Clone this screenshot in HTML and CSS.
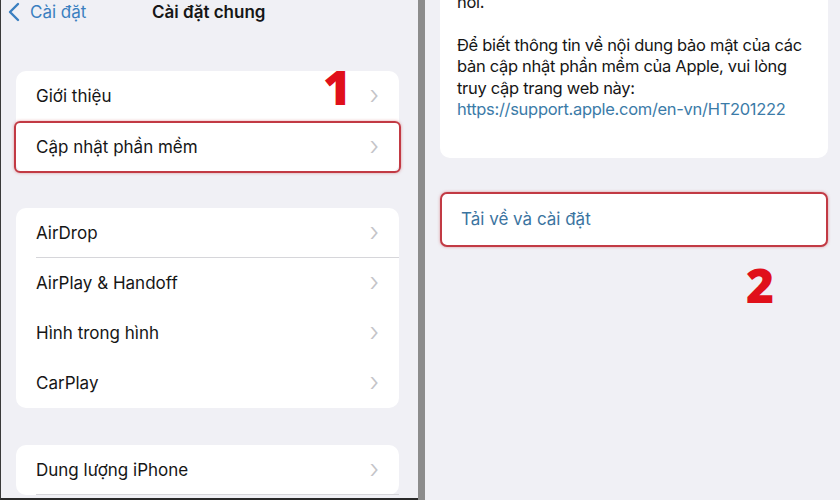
FILE: index.html
```html
<!DOCTYPE html>
<html>
    <head>
        <title>Cài đặt chung</title>
        <meta charset="utf-8">
        <link rel="stylesheet" href="styles.css">
    </head>
    <body>
        <div class="screen">
            <div class="pane left">
                <div class="nav">
                    <span class="back">
                        <svg width="12" height="20" viewBox="0 0 12 20"><path d="M10 2 L2 10 L10 18" fill="none" stroke="#3a7fc0" stroke-width="2.4" stroke-linecap="round" stroke-linejoin="round"/></svg>
                        Cài đặt
                    </span>
                    <span class="title">Cài đặt chung</span>
                </div>

                <div class="group first">
                    <div class="row">Giới thiệu <span class="chev">›</span></div>
                    <div class="row marked">Cập nhật phần mềm <span class="chev">›</span></div>
                    <span class="step one">1</span>
                </div>

                <div class="group">
                    <div class="row line">AirDrop <span class="chev">›</span></div>
                    <div class="row">AirPlay &amp; Handoff <span class="chev">›</span></div>
                    <div class="row">Hình trong hình <span class="chev">›</span></div>
                    <div class="row">CarPlay <span class="chev">›</span></div>
                </div>

                <div class="group last">
                    <div class="row line">Dung lượng iPhone <span class="chev">›</span></div>
                </div>
            </div>

            <div class="divider"></div>

            <div class="pane right">
                <div class="notes">
                    <p>nói.</p>
                    <p>Để biết thông tin về nội dung bảo mật của các<br>
                    bản cập nhật phần mềm của Apple, vui lòng<br>
                    truy cập trang web này:<br>
                    <span class="link">https://support.apple.com/en-vn/HT201222</span></p>
                </div>
                <div class="action">
                    <div class="action_btn">Tải về và cài đặt</div>
                    <span class="step two">2</span>
                </div>
            </div>
        </div>
    </body>
</html>
```

FILE: styles.css
```css
body {
    margin: 0;
    background-color: #f0f0f5;
    font-family: Inter, "Noto Sans", sans-serif;
    color: #161616;
}
.screen {
    display: flex;
    width: 840px;
    height: 500px;
    overflow: hidden;
}
.pane {
    background-color: #f0f0f5;
    height: 500px;
    box-sizing: border-box;
}
.left {
    width: 418px;
    flex-shrink: 0;
    border-left: 1px solid #3a3a3a;
    border-bottom: 2px solid #2a2a2a;
    padding: 0 19px 0 15px;
}
.divider {
    width: 7px;
    flex-shrink: 0;
    background-color: #8c8c8c;
}
.right {
    flex: 1;
    min-width: 0;
    padding: 0 12px 0 15px;
}

/* nav bar */
.nav {
    position: relative;
    height: 27px;
    font-size: 17px;
}
.back {
    position: absolute;
    left: -8px;
    top: 2px;
    display: flex;
    align-items: center;
    gap: 10px;
    color: #3a7fc0;
}
.title {
    position: absolute;
    left: 136px;
    top: 2px;
    font-weight: 600;
}

/* grouped list */
.group {
    position: relative;
    background-color: #fff;
    border-radius: 10px;
    margin-top: 35px;
}
.group.first {
    margin-top: 44px;
}
.group.last {
    margin-top: 37px;
}
.row {
    position: relative;
    display: flex;
    align-items: center;
    justify-content: space-between;
    height: 50px;
    padding: 0 20px 0 20px;
    font-size: 17px;
}
.row.line::after {
    content: "";
    position: absolute;
    left: 20px;
    right: 0;
    bottom: 0;
    border-bottom: 1px solid #d6d6da;
}
.chev {
    color: #c4c4c8;
    font-size: 26px;
    font-weight: 300;
    line-height: 1;
    margin-top: -3px;
}
.marked {
    border: 2px solid #c23a44;
    border-radius: 6px;
    margin: 0 -2px;
    height: 52px;
    box-sizing: border-box;
    box-shadow: 0 0 3px rgba(200, 60, 70, 0.5);
}
.step {
    position: absolute;
    color: #e0101a;
    font-family: "Open Sans", sans-serif;
    font-weight: 800;
    font-size: 48px;
    line-height: 1;
}
.step.one {
    right: 48px;
    top: -8px;
}
.step.two {
    right: 54px;
    bottom: -62px;
}

/* right side */
.notes {
    background-color: #fff;
    border-radius: 10px;
    margin-top: -20px;
    padding: 12px 4px 37px 17px;
    font-size: 16.5px;
    letter-spacing: -0.3px;
    line-height: 21.5px;
    white-space: nowrap;
}
.notes p {
    margin: 0 0 21px 0;
}
.notes p:last-child {
    margin-bottom: 0;
}
.link {
    color: #3b7ba8;
}
.action {
    position: relative;
    margin-top: 34px;
}
.action_btn {
    background-color: #fff;
    border: 2px solid #c23a44;
    border-radius: 7px;
    height: 55px;
    box-sizing: border-box;
    display: flex;
    align-items: center;
    padding-left: 19px;
    color: #3b74a0;
    font-size: 17px;
    box-shadow: 0 0 3px rgba(200, 60, 70, 0.5);
}
```
